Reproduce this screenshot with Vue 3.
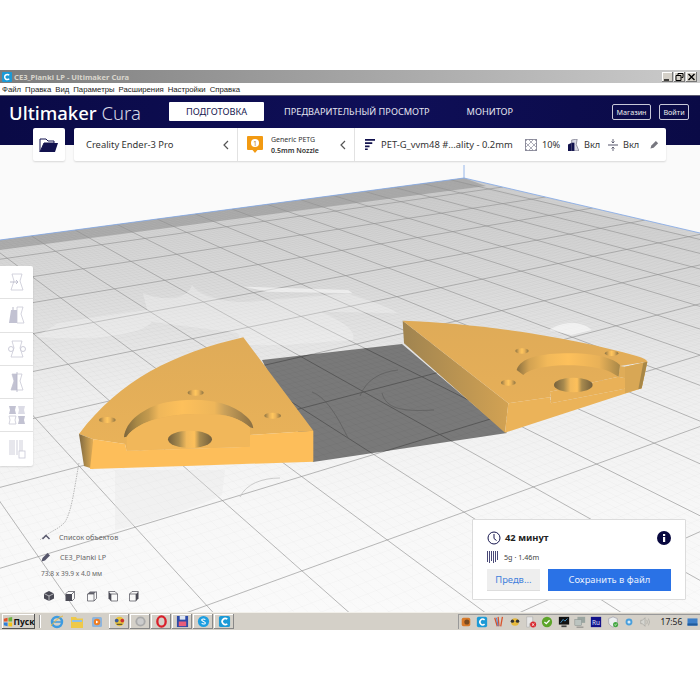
<script setup>
// perspective of the build plate, measured from the screenshot
const project = (j, k) => {
  const s = -0.0183 * j
  const t = -0.045 * k
  const w = 1 + s + t
  return [(464 + s * 1923 - t * 360) / w, (178 - s * 17 - t * 14) / w]
}

const linesPath = (step, skipMajor) => {
  let d = ''
  const pt = (p) => p[0].toFixed(1) + ' ' + p[1].toFixed(1)
  const count = Math.round(24 / step)
  for (let n = 0; n <= count; n++) {
    const j = 0.5 + n * step
    if (skipMajor && n % 10 === 0) continue
    const kEnd = (0.85 - 0.0183 * j) / 0.045
    if (kEnd > 0) d += 'M' + pt(project(j, 0)) + 'L' + pt(project(j, kEnd))
  }
  const kCount = Math.round(19 / step)
  for (let n = 1; n <= kCount; n++) {
    const k = n * step
    if (skipMajor && n % 10 === 0) continue
    const jEnd = Math.min(24.5, (0.85 - 0.045 * k) / 0.0183)
    if (jEnd > 0) d += 'M' + pt(project(0, k)) + 'L' + pt(project(jEnd, k))
  }
  return d
}

const majorLines = linesPath(1, false)
const minorLines = linesPath(0.1, true)

const menu = ['Файл', 'Правка', 'Вид', 'Параметры', 'Расширения', 'Настройки', 'Справка']
</script>

<template>
  <div class="page">
    <div class="window">
      <div class="titlebar">
        <svg class="title-icon" viewBox="0 0 10 10"><rect width="10" height="10" rx="1" fill="#1c9ad6"/><path d="M7.2 3.2A2.6 2.6 0 1 0 7.2 6.8" fill="none" stroke="#fff" stroke-width="1.5"/></svg>
        <span class="title-text">CE3_Planki LP - Ultimaker Cura</span>
        <div class="win-buttons">
          <span class="win-btn"><svg viewBox="0 0 11 10"><path d="M2 8h5" stroke="#000" stroke-width="1.4"/></svg></span>
          <span class="win-btn"><svg viewBox="0 0 11 10"><path d="M4 3.5V1.5h5v4H7.5M2 3.5h5v5H2z" fill="none" stroke="#000"/></svg></span>
          <span class="win-btn"><svg viewBox="0 0 11 10"><path d="M2.5 2l6 6M8.500 2l-6 6" stroke="#000" stroke-width="1.4"/></svg></span>
        </div>
      </div>

      <div class="menubar">
        <span v-for="item in menu" :key="item">{{ item }}</span>
      </div>

      <header class="header">
        <div class="brand"><b>Ultimaker</b> <span>Cura</span></div>
        <nav class="tabs">
          <span class="tab active">ПОДГОТОВКА</span>
          <span class="tab">ПРЕДВАРИТЕЛЬНЫЙ ПРОСМОТР</span>
          <span class="tab">МОНИТОР</span>
        </nav>
        <div class="head-buttons">
          <span class="head-btn shop">Магазин</span>
          <span class="head-btn login">Войти</span>
        </div>
      </header>

      <div class="viewport">
        <svg class="scene" viewBox="0 145 700 467">
          <defs>
            <linearGradient id="plate" gradientUnits="userSpaceOnUse" x1="0" y1="178" x2="0" y2="612">
              <stop offset="0" stop-color="#cdcdcd"/>
              <stop offset="0.25" stop-color="#dadada"/>
              <stop offset="0.5" stop-color="#eeeeee"/>
              <stop offset="0.75" stop-color="#f7f7f7"/>
              <stop offset="1" stop-color="#fafafa"/>
            </linearGradient>
            <linearGradient id="topL" x1="0" y1="0" x2="0" y2="1">
              <stop offset="0" stop-color="#dfab58"/>
              <stop offset="1" stop-color="#e9b259"/>
            </linearGradient>
            <linearGradient id="topR" x1="0" y1="0" x2="0" y2="1">
              <stop offset="0" stop-color="#dfab58"/>
              <stop offset="1" stop-color="#e6af58"/>
            </linearGradient>
            <linearGradient id="wallL" x1="0" y1="0" x2="1" y2="0">
              <stop offset="0" stop-color="#7c653c"/>
              <stop offset="0.1" stop-color="#a98946"/>
              <stop offset="0.19" stop-color="#c49a4e"/>
              <stop offset="0.27" stop-color="#efb75a"/>
              <stop offset="0.45" stop-color="#fdc05b"/>
              <stop offset="0.7" stop-color="#eeb65a"/>
              <stop offset="0.78" stop-color="#c9a05a"/>
              <stop offset="1" stop-color="#8a6f42"/>
            </linearGradient>
            <linearGradient id="wallR" x1="0" y1="0" x2="1" y2="0">
              <stop offset="0" stop-color="#8c7140"/>
              <stop offset="0.12" stop-color="#d2a252"/>
              <stop offset="0.3" stop-color="#f2b95a"/>
              <stop offset="0.5" stop-color="#fdc05b"/>
              <stop offset="0.8" stop-color="#e8b158"/>
              <stop offset="1" stop-color="#a78748"/>
            </linearGradient>
            <linearGradient id="bore" x1="0" y1="0" x2="1" y2="0">
              <stop offset="0" stop-color="#74603c"/>
              <stop offset="0.25" stop-color="#a88a4e"/>
              <stop offset="0.42" stop-color="#f1b95c"/>
              <stop offset="0.6" stop-color="#fdc05b"/>
              <stop offset="0.72" stop-color="#a88a4e"/>
              <stop offset="1" stop-color="#74603c"/>
            </linearGradient>
            <linearGradient id="pin" x1="0" y1="0" x2="1" y2="0">
              <stop offset="0" stop-color="#8c7444"/>
              <stop offset="0.3" stop-color="#e8b158"/>
              <stop offset="0.5" stop-color="#ffc65e"/>
              <stop offset="0.7" stop-color="#e8b158"/>
              <stop offset="1" stop-color="#8c7444"/>
            </linearGradient>
            <linearGradient id="edgeL" x1="0" y1="0" x2="1" y2="0">
              <stop offset="0" stop-color="#7e6740"/>
              <stop offset="0.5" stop-color="#b08c4a"/>
              <stop offset="1" stop-color="#e2ad57"/>
            </linearGradient>
            <linearGradient id="sideR" x1="0" y1="0" x2="1" y2="0">
              <stop offset="0" stop-color="#a08450"/>
              <stop offset="1" stop-color="#d2a253"/>
            </linearGradient>
            <clipPath id="plateClip"><polygon points="464,178 0,240 0,612 700,612 700,233"/></clipPath>
            <clipPath id="grayClip"><polygon points="262,360 402,344 507,433 313,462"/></clipPath>
          </defs>

          <polygon points="464,178 0,240 0,612 700,612 700,233" fill="url(#plate)"/>
          <polygon points="464,178 0,240 0,250 486,186" fill="#adadad"/>
          <path :d="minorLines" clip-path="url(#plateClip)" stroke="#000" stroke-opacity="0.035" stroke-width="0.6" fill="none"/>
          <path :d="majorLines" clip-path="url(#plateClip)" stroke="#8f8f8f" stroke-opacity="0.7" stroke-width="0.9" fill="none"/>
          <path d="M0 240L464 178L700 233M464 178V165" stroke="#7fa6e6" stroke-width="0.8" fill="none"/>

          <!-- pale shadows left on the plate -->
          <g transform="translate(0 145) scale(0.4464 0.3333)" fill="#fff" fill-opacity="0.25">
            <path d="M130 535C200 520 290 500 330 495L320 445C370 470 420 465 430 420C450 460 520 475 560 470L780 445C830 470 880 490 890 505L720 500C770 530 800 560 790 585L640 600L480 600C560 580 550 560 480 555L340 530C320 570 200 590 80 575Z"/>
            <path d="M1230 555C1260 530 1300 525 1325 555L1280 570Z" fill-opacity="0.55"/>
            <path d="M545 425L780 435L790 445L600 440Z" fill-opacity="0.5"/>
          </g>
          <path d="M115 470H225L222 495C190 510 140 525 115 530Z" fill="#e4e4e4" fill-opacity="0.3"/>
          <path d="M79 463C74 490 72 510 65 522C58 530 48 532 40 540" fill="none" stroke="#a8a8a8" stroke-width="0.8" stroke-dasharray="1.500 1"/>
          <path d="M240 497C246 484 262 478 280 478" fill="none" stroke="#c0c0c0" stroke-width="0.8"/>

          <!-- plate seen through the gap between the parts -->
          <polygon points="262,360 402,344 507,433 313,462" fill="#797979"/>
          <g clip-path="url(#grayClip)">
            <path :d="minorLines" stroke="#000" stroke-opacity="0.05" stroke-width="0.5" fill="none"/>
            <path :d="majorLines" stroke="#555" stroke-width="0.9" fill="none"/>
            <path d="M360 396C366 380 380 372 398 370M382 393C386 408 400 412 434 410M312 392C328 398 340 422 348 438" stroke="#5c5c5c" stroke-width="0.7" fill="none"/>
          </g>

          <!-- left part -->
          <g transform="translate(60 320) scale(0.3333)">
            <path d="M57 342C180 180 340 100 550 52L760 332L570 345V380L200 392L195 372L100 358Z" fill="url(#topL)"/>
            <path d="M57 342L100 358V447L72 438Z" fill="url(#edgeL)"/>
            <path d="M100 358L195 372L200 392L570 380V345L760 332V425L400 437L90 447Z" fill="#fdbe5a"/>
            <path d="M192 352C196 305 250 262 320 247C400 232 500 235 560 290Q578 305 580 325L570 322C540 295 500 282 440 282C340 280 240 295 200 350Z" fill="url(#wallL)"/>
            <path d="M200 350C240 295 340 280 440 282C500 282 540 295 570 322V380L200 392Z" fill="#f1b75a"/>
            <ellipse cx="390" cy="358" rx="66" ry="26" fill="url(#bore)"/>
            <ellipse cx="407" cy="218" rx="24" ry="9" fill="url(#pin)"/>
            <ellipse cx="142" cy="300" rx="25" ry="9" fill="url(#pin)"/>
            <ellipse cx="638" cy="287" rx="25" ry="9" fill="url(#pin)"/>
          </g>

          <!-- right part -->
          <g transform="translate(390 310) scale(0.3333)">
            <path d="M38 32L355 280L345 368L42 100Z" fill="url(#sideR)"/>
            <path d="M38 32C280 40 560 85 740 138Q772 148 772 155L690 168L685 200L480 245V262L355 280Z" fill="url(#topR)"/>
            <path d="M355 280L480 262L483 280L705 236V170L772 155L755 235L345 368Z" fill="#ebb359"/>
            <path d="M690 168L705 170V205L685 200Z" fill="#dfac58"/>
            <path d="M705 170L772 155L755 235L705 250Z" fill="#d8a755"/>
            <path d="M772 155L755 235L745 238L760 158Z" fill="#a78748"/>
            <path d="M483 280L480 245L685 200L705 205V236Z" fill="#e9b158"/>
            <path d="M380 180C392 140 460 128 560 130C620 132 670 145 690 165L686 200L660 185C620 168 540 160 470 170C430 175 410 185 400 195Z" fill="url(#wallR)"/>
            <ellipse cx="550" cy="225" rx="58" ry="22" fill="url(#bore)"/>
            <ellipse cx="396" cy="123" rx="20" ry="8" fill="url(#pin)"/>
            <ellipse cx="665" cy="130" rx="20" ry="8" fill="url(#pin)"/>
            <ellipse cx="355" cy="218" rx="22" ry="9" fill="url(#pin)"/>
          </g>
        </svg>

        <div class="tools">
          <div class="tool">
            <svg viewBox="0 0 20 20"><path d="M5 2H15L13 9L16 18H4L7 9Z" fill="none" stroke="#c9c9d6" stroke-width="0.8"/><path d="M3 10H11M9 8L11 10L9 12" fill="none" stroke="#b9b9c8" stroke-width="0.9"/></svg>
          </div>
          <div class="tool">
            <svg viewBox="0 0 20 20"><path d="M10 2H16L14 9L17 18H10Z" fill="none" stroke="#c9c9d6" stroke-width="0.8"/><path d="M4 5H10V18H2Z" fill="#c2c2d2"/><path d="M6 2V5" stroke="#b9b9c8"/></svg>
          </div>
          <div class="tool">
            <svg viewBox="0 0 20 20"><path d="M5 2H15L13 9L16 18H4L7 9Z" fill="none" stroke="#c9c9d6" stroke-width="0.8"/><circle cx="4" cy="10" r="2.500" fill="#fff" stroke="#c0c0cf" stroke-width="0.8"/><circle cx="16" cy="10" r="2.500" fill="#fff" stroke="#c0c0cf" stroke-width="0.8"/></svg>
          </div>
          <div class="tool">
            <svg viewBox="0 0 20 20"><path d="M5 2H15L13 9L16 18H4L7 9Z" fill="none" stroke="#c9c9d6" stroke-width="0.8"/><path d="M5 2H10V18H4L7 9Z" fill="#c2c2d2"/><path d="M10 0V20" stroke="#b4b4c6" stroke-width="0.8"/></svg>
          </div>
          <div class="tool">
            <svg viewBox="0 0 20 20"><path d="M2 1H9L8 5L9 9H2L3 5Z" fill="#c2c2d2"/><path d="M11 1H18L17 5L18 9H11L12 5Z" fill="#dcdce6"/><path d="M2 11H9L8 15L9 19H2L3 15Z" fill="none" stroke="#c9c9d6" stroke-width="0.8"/><path d="M11 11H18L17 15L18 19H11L12 15Z" fill="#c2c2d2"/></svg>
          </div>
          <div class="tool">
            <svg viewBox="0 0 20 20"><path d="M3 1V16M5 1V16M7 1V16M10 1V16M13 1V12M15 1V12" stroke="#c9c9d6" stroke-width="0.9"/><rect x="12" y="12" width="6" height="7" fill="#fff" stroke="#c9c9d6" stroke-width="0.8"/></svg>
          </div>
        </div>

        <div class="objects">
          <div class="obj-row">
            <svg class="obj-icon" viewBox="0 0 10 10"><path d="M1.500 7L5 3.500L8.500 7" fill="none" stroke="#55556a" stroke-width="1.400"/></svg>
            <span>Список объектов</span>
          </div>
          <div class="obj-row name">
            <svg class="obj-icon" viewBox="0 0 10 10"><path d="M0.500 9.500L1.500 6L6.500 1L9 3.500L4 8.500Z" fill="#55556a"/></svg>
            <span>CE3_Planki LP</span>
          </div>
          <div class="dims">73.8 x 39.9 x 4.0 мм</div>
          <div class="views">
            <svg viewBox="0 0 12 12"><path d="M6 1L11 3.500V8.500L6 11L1 8.500V3.500Z" fill="#4a4a55"/><path d="M1 3.500L6 6L11 3.500M6 6V11" stroke="#fff" stroke-width="0.6" fill="none"/></svg>
            <svg viewBox="0 0 12 12"><path d="M1.500 4H8V11H1.500Z" fill="#4a4a55"/><path d="M1.500 4L4 1.500H10.500V8.500L8 11M8 4L10.500 1.500" fill="none" stroke="#4a4a55" stroke-width="0.7"/></svg>
            <svg viewBox="0 0 12 12"><path d="M1.500 4L4 1.500H10.500L8 4Z" fill="#6a6a75"/><path d="M1.500 4H8V11H1.500ZM8 11L10.500 8.500V1.500" fill="none" stroke="#4a4a55" stroke-width="0.7"/></svg>
            <svg viewBox="0 0 12 12"><path d="M1.500 1.500L4 4V11L1.500 8.500Z" fill="#4a4a55"/><path d="M1.500 1.500H8L10.500 4V11H4V4H10.500" fill="none" stroke="#4a4a55" stroke-width="0.7"/></svg>
            <svg viewBox="0 0 12 12"><path d="M8 4L10.500 1.500V8.500L8 11Z" fill="#4a4a55"/><path d="M1.500 4H8V11H1.500ZM1.500 4L4 1.500H10.500" fill="none" stroke="#4a4a55" stroke-width="0.7"/></svg>
          </div>
        </div>

        <div class="print-card">
          <div class="time-row">
            <svg class="clock" viewBox="0 0 14 14"><circle cx="7" cy="7" r="6" fill="none" stroke="#16164e" stroke-width="1"/><path d="M7 3V7.500L9.500 9.500" fill="none" stroke="#16164e"/></svg>
            <span class="time">42 минут</span>
            <svg class="info" viewBox="0 0 14 14"><circle cx="7" cy="7" r="7" fill="#08083f"/><rect x="6" y="6" width="2.200" height="5" fill="#fff"/><rect x="6" y="3" width="2.200" height="2" fill="#fff"/></svg>
          </div>
          <div class="usage-row">
            <svg class="spool" viewBox="0 0 12 12"><path d="M0.500 0V11M2.500 0V12M4.500 0V10M6.500 0V12M8.500 0V11M10.500 0V9" stroke="#4a4a78" stroke-width="1"/></svg>
            <span>5g · 1.46m</span>
          </div>
          <div class="actions">
            <span class="btn-preview">Предв...</span>
            <span class="btn-save">Сохранить в файл</span>
          </div>
        </div>
      </div>

      <div class="toolbar">
        <div class="folder">
          <svg viewBox="0 0 20 16"><path d="M1 15V2H7L9 4H15V6H5Z" fill="none" stroke="#12124e" stroke-width="1"/><path d="M1 15L5 6H19L16 15Z" fill="#12124e"/></svg>
        </div>
        <div class="settings">
          <div class="sec machine">
            <span class="machine-name">Creality Ender-3 Pro</span>
            <svg class="chev" viewBox="0 0 6 10"><path d="M5 1L1 5L5 9" fill="none" stroke="#555" stroke-width="1.200"/></svg>
          </div>
          <div class="sec extruder">
            <svg class="badge" viewBox="0 0 16 18"><path d="M1 0H15Q16 0 16 1V13Q16 14 15 14H10.500L8 17L5.500 14H1Q0 14 0 13V1Q0 0 1 0Z" fill="#f29a12"/><circle cx="8" cy="7" r="4" fill="#fff"/><text x="8" y="9.500" font-size="6.500" text-anchor="middle" fill="#b87500" font-family="Noto Sans, sans-serif">1</text></svg>
            <div class="ext-text">
              <span>Generic PETG</span>
              <b>0.5mm Nozzle</b>
            </div>
            <svg class="chev" viewBox="0 0 6 10"><path d="M5 1L1 5L5 9" fill="none" stroke="#555" stroke-width="1.200"/></svg>
          </div>
          <div class="sec profile">
            <svg class="ico-profile" viewBox="0 0 11 12"><path d="M0 0H11V2H0ZM0 3.500H8V5.500H0ZM0 7H5V9H0ZM0 10.500H3V12H0Z" fill="#12124e"/></svg>
            <span class="profile-name">PET-G_vvm48 #...ality - 0.2mm</span>
            <svg class="ico-infill" viewBox="0 0 12 12"><rect x="0.500" y="0.500" width="11" height="11" fill="none" stroke="#8a8a9a"/><path d="M0 3L3 0M0 9L9 0M3 12L12 3M9 12L12 9M0 3L9 12M3 0L12 9M0 9L3 12M9 0L12 3" stroke="#9a9aa8" stroke-width="0.8"/></svg>
            <span class="val pct">10%</span>
            <svg class="ico-support" viewBox="0 0 12 13"><path d="M0 13V6L4 4V13Z" fill="#12124e"/><path d="M4 1L10 0L9 6L12 13H4Z" fill="#12124e" fill-opacity="0.15" stroke="#55556a" stroke-width="0.6"/><path d="M4 4H7V13H4Z" fill="#12124e"/></svg>
            <span class="val">Вкл</span>
            <svg class="ico-adhesion" viewBox="0 0 10 12"><path d="M0 6H10" stroke="#55556a" stroke-width="1"/><path d="M5 0V4M3.500 2.500L5 4L6.500 2.500M5 12V8M3.500 9.500L5 8L6.500 9.500" fill="none" stroke="#55556a" stroke-width="0.9"/></svg>
            <span class="val">Вкл</span>
            <svg class="ico-pencil" viewBox="0 0 10 10"><path d="M0.500 9.500L1.500 6L6.500 1L9 3.500L4 8.500Z" fill="#77777f"/></svg>
          </div>
        </div>
      </div>

      <footer class="taskbar">
        <span class="start">
          <svg viewBox="0 0 12 12"><path d="M1 2L5.500 1V5.500H1Z" fill="#e2552b"/><path d="M6.500 1L11 0V5.500H6.500Z" fill="#6cb33f"/><path d="M1 6.500H5.500V11L1 10Z" fill="#2f7fd6"/><path d="M6.500 6.500H11V11.500L6.500 11Z" fill="#f5c518"/></svg>
          <b>Пуск</b>
        </span>
        <i class="bar-sep"></i>
        <div class="quick">
          <svg viewBox="0 0 14 14"><circle cx="7" cy="7" r="5" fill="none" stroke="#3d9be0" stroke-width="2.400"/><path d="M2 7H12" stroke="#3d9be0" stroke-width="1.500"/><path d="M1 11C4 7 9 2 13 1" stroke="#e8b93c" fill="none"/></svg>
          <svg viewBox="0 0 14 14"><path d="M1 2H6L7 3.500H13V13H1Z" fill="#eec94a"/><path d="M2 5H12V7H2Z" fill="#8fc0e6"/></svg>
          <svg viewBox="0 0 14 14"><rect x="2" y="2" width="10" height="10" rx="1.500" fill="#8db4dc"/><circle cx="7" cy="7" r="3.200" fill="#ef7d22"/><path d="M6 5.500L8.500 7L6 8.500Z" fill="#fff"/></svg>
        </div>
        <div class="tasks">
          <span class="task"><svg viewBox="0 0 14 14"><circle cx="7" cy="7" r="5" fill="#e6c23e"/><circle cx="4" cy="6" r="2" fill="#3c5a9a"/><circle cx="10" cy="6" r="2" fill="#c33"/><path d="M4 10H10" stroke="#333"/></svg></span>
          <span class="task"><svg viewBox="0 0 14 14"><circle cx="7" cy="7" r="5.500" fill="#aaa"/><circle cx="7" cy="7" r="3.500" fill="#ccc"/></svg></span>
          <span class="task"><svg viewBox="0 0 14 14"><ellipse cx="7" cy="7" rx="4.500" ry="5.500" fill="none" stroke="#d9202a" stroke-width="2.500"/></svg></span>
          <span class="task"><svg viewBox="0 0 14 14"><rect x="1" y="1" width="12" height="12" fill="#2c4aa8"/><rect x="4" y="1" width="6" height="4" fill="#dfe6f2"/><rect x="3" y="7" width="8" height="5" fill="#e85d7a"/></svg></span>
          <span class="task"><svg viewBox="0 0 14 14"><circle cx="7" cy="7" r="6" fill="#1d9ee0"/><path d="M9 5C8 4 5 4 5 5.500S9 7 9 8.500S6 10 5 9" fill="none" stroke="#fff" stroke-width="1.200"/></svg></span>
          <span class="task"><svg viewBox="0 0 14 14"><rect x="1" y="1" width="12" height="12" rx="2" fill="#1c9ad6"/><path d="M10 4.500A3.300 3.300 0 1 0 10 9.500" fill="none" stroke="#fff" stroke-width="1.800"/></svg></span>
        </div>
        <div class="tray">
          <svg viewBox="0 0 14 14"><rect x="2" y="2" width="10" height="10" rx="2" fill="#d87a2a"/><circle cx="8" cy="7" r="3" fill="#7a4a20"/></svg>
          <svg viewBox="0 0 14 14"><rect x="1" y="1" width="12" height="12" rx="2" fill="#1c9ad6"/><path d="M10 4.500A3.300 3.300 0 1 0 10 9.500" fill="none" stroke="#fff" stroke-width="1.800"/></svg>
          <svg viewBox="0 0 14 14"><path d="M2 2L5 12M6 1L7 12M11 1L9 12" fill="none" stroke="#d9532c" stroke-width="1.500"/><path d="M4 2L6 12" stroke="#3a7bd5"/></svg>
          <svg viewBox="0 0 14 14"><circle cx="7" cy="7" r="4.500" fill="#e6b93e"/><circle cx="4" cy="6" r="2" fill="#333"/><circle cx="10" cy="6" r="2" fill="#333"/></svg>
          <svg viewBox="0 0 14 14"><path d="M2 1H9V9H5V13H2Z" fill="#e8e8e8" stroke="#999" stroke-width="0.500"/><circle cx="9.500" cy="10" r="3.500" fill="#d8262c"/><path d="M8 8.500L11 11.500M11 8.500L8 11.500" stroke="#fff"/></svg>
          <svg viewBox="0 0 14 14"><circle cx="7" cy="7" r="6" fill="#5da52a"/><path d="M4 7L6.200 9L10 5" fill="none" stroke="#fff" stroke-width="1.500"/></svg>
          <svg viewBox="0 0 14 14"><rect x="1" y="1" width="12" height="9" fill="#111"/><path d="M3 8L6 4L8 6L11 3" stroke="#4aa3e0" fill="none"/><path d="M4 12H10" stroke="#444" stroke-width="2"/></svg>
          <svg viewBox="0 0 14 14"><rect x="4" y="1" width="9" height="7" fill="#9aa5a0"/><rect x="1" y="4" width="8" height="7" fill="#bcc4c0" stroke="#7a8480" stroke-width="0.500"/><path d="M3 13H11" stroke="#777"/></svg>
          <svg viewBox="0 0 14 14"><rect x="1" y="1" width="12" height="12" fill="#12128a"/><text x="7" y="10" font-size="7.500" text-anchor="middle" fill="#dfe3ff" font-family="Noto Sans, sans-serif">Ru</text></svg>
          <svg viewBox="0 0 14 14"><path d="M7 1L12 3V8C12 10 9 12 7 13C5 12 2 10 2 8V3Z" fill="#eceff0" stroke="#889" stroke-width="0.600"/><circle cx="10" cy="10" r="3" fill="#45a843"/><path d="M8.700 10L9.700 11L11.300 9" stroke="#fff" fill="none" stroke-width="0.800"/></svg>
          <svg viewBox="0 0 14 14"><circle cx="7" cy="7" r="4" fill="#4a9fdc"/><circle cx="7" cy="7" r="1.800" fill="#d8eaf8"/></svg>
          <svg viewBox="0 0 14 14"><path d="M2 5H4L7 2V12L4 9H2Z" fill="#d5d5d0" stroke="#8a8a85" stroke-width="0.500"/><path d="M9 4.500Q10.500 7 9 9.500M11 3Q13.500 7 11 11" fill="none" stroke="#a5a5a0" stroke-width="0.800"/></svg>
          <span class="clock-time">17:56</span>
          <svg class="desktop" viewBox="0 0 14 14"><rect x="0" y="2" width="14" height="10" fill="#3d7fc8"/><path d="M0 9H14V12H0Z" fill="#1f5a9c"/></svg>
        </div>
      </footer>
    </div>
  </div>
</template>

<style scoped>
.page {
  width: 700px;
  height: 700px;
  padding-top: 70px;
  box-sizing: border-box;
  background: #fff;
  font-family: "Noto Sans", "Open Sans", sans-serif;
  overflow: hidden;
}

.window {
  position: relative;
  height: 560px;
  display: flex;
  flex-direction: column;
}

.titlebar {
  height: 13px;
  display: flex;
  align-items: center;
  background: linear-gradient(90deg, #7d7d7d, #cbcbcb);
  padding-left: 2px;
  flex: none;
}

.title-icon { width: 10px; height: 10px; }

.title-text {
  margin-left: 2px;
  font-size: 7.6px;
  font-weight: 700;
  color: #d8d5cc;
  white-space: nowrap;
}

.win-buttons {
  margin-left: auto;
  margin-right: 3px;
  display: flex;
  gap: 1px;
}

.win-btn {
  width: 11px;
  height: 10px;
  background: #d4d0c8;
  box-shadow: inset -1px -1px #777, inset 1px 1px #fff;
  display: block;
}

.win-btn svg { display: block; width: 11px; height: 10px; }

.menubar {
  height: 12px;
  flex: none;
  background: #fff;
  display: flex;
  align-items: center;
  gap: 4px;
  padding-left: 2px;
  font-family: "Liberation Sans", sans-serif;
  font-size: 7.75px;
  color: #222;
}

.header {
  height: 50px;
  flex: none;
  box-sizing: border-box;
  border-top: 1px solid #5a5a70;
  background: linear-gradient(90deg, #0a0a46, #0f0f58 55%, #0a0a46);
  display: flex;
  align-items: flex-start;
  padding: 6px 11px 0 9px;
}

.brand {
  width: 160px;
  flex: none;
  font-size: 18.5px;
  line-height: 22px;
  color: #fff;
  white-space: nowrap;
}

.brand b { font-weight: 500; }
.brand span { font-weight: 300; color: #d8d8e4; }

.tabs {
  display: flex;
  align-items: center;
  font-size: 9.2px;
  color: #e4e4f0;
  white-space: nowrap;
}

.tab { line-height: 19px; margin-right: 37px; }

.tab.active {
  width: 95px;
  text-align: center;
  background: #fff;
  color: #16164e;
  margin-right: 20px;
  border-radius: 1px;
}

.head-buttons {
  margin-left: auto;
  display: flex;
  gap: 8px;
  margin-top: 2px;
}

.head-btn {
  height: 16px;
  line-height: 15px;
  box-sizing: border-box;
  border: 1px solid #c8c8d8;
  border-radius: 2px;
  font-size: 7.2px;
  color: #eee;
  text-align: center;
}

.shop { width: 39px; }
.login { width: 30px; }

.viewport {
  position: relative;
  flex: 1;
  background: #fafafa;
  overflow: hidden;
}

.scene {
  position: absolute;
  left: 0;
  top: 0;
  width: 700px;
  height: 467px;
  display: block;
}

.toolbar {
  position: absolute;
  left: 33px;
  top: 58px;
  display: flex;
  gap: 9px;
  color: #333;
}

.folder, .settings {
  height: 33px;
  background: #fff;
  border-radius: 2px;
  box-shadow: 0 1px 2px rgba(0, 0, 0, 0.14);
}

.folder {
  width: 32px;
  display: flex;
  align-items: center;
  justify-content: center;
}

.folder svg { width: 20px; height: 16px; }

.settings { width: 592px; display: flex; }

.sec {
  display: flex;
  align-items: center;
  box-sizing: border-box;
  border-right: 1px solid #e2e2e2;
}

.sec:last-child { border-right: none; }

.machine { width: 164px; padding-left: 12px; }
.machine-name { font-size: 9.4px; width: 137px; white-space: nowrap; }
.chev { width: 6px; height: 10px; flex: none; }

.extruder { width: 117px; padding-left: 9px; }
.badge { width: 16px; height: 18px; flex: none; }

.ext-text {
  margin-left: 8px;
  width: 69px;
  display: flex;
  flex-direction: column;
  font-size: 7px;
  line-height: 11px;
  white-space: nowrap;
}

.ext-text b { font-weight: 600; }

.profile { flex: 1; padding-left: 10px; }
.profile svg { flex: none; }
.ico-profile { width: 10px; height: 11px; }
.profile-name { margin-left: 6px; width: 144px; font-size: 9.4px; white-space: nowrap; flex: none; }
.ico-infill { width: 12px; height: 12px; }
.val { font-size: 9.2px; margin-left: 5px; width: 16px; flex: none; white-space: nowrap; }
.pct { width: 20px; }
.ico-support { width: 11px; height: 12px; margin-left: 6px; }
.ico-adhesion { width: 10px; height: 12px; margin-left: 8px; }
.ico-pencil { width: 9px; height: 9px; margin-left: 11px; }

.tools {
  position: absolute;
  left: 0;
  top: 121px;
  width: 33px;
  background: #fff;
  border-radius: 0 2px 2px 0;
  box-shadow: 0 1px 2px rgba(0, 0, 0, 0.12);
}

.tool {
  height: 33.3px;
  box-sizing: border-box;
  border-bottom: 1px solid #e2e2e2;
  display: flex;
  align-items: center;
  justify-content: center;
}

.tool:last-child { border-bottom: none; }
.tool svg { width: 20px; height: 20px; }

.objects {
  position: absolute;
  left: 41px;
  top: 385px;
  font-size: 7.2px;
  color: #666;
  white-space: nowrap;
}

.obj-row {
  display: flex;
  align-items: center;
  height: 14px;
}

.obj-row.name { margin-top: 6px; }
.obj-icon { width: 10px; height: 10px; margin-right: 8px; }
.obj-row.name .obj-icon { margin-right: 9px; }
.dims { margin-top: 3px; line-height: 14px; font-size: 6.6px; }

.views {
  display: flex;
  gap: 9.3px;
  margin-top: 9px;
  margin-left: 2px;
}

.views svg { width: 12px; height: 12px; }

.print-card {
  position: absolute;
  left: 472px;
  top: 374px;
  width: 214px;
  height: 81px;
  box-sizing: border-box;
  background: #fff;
  border: 1px solid #dcdcdc;
  border-radius: 1px;
  padding: 10px 14px 0;
}

.time-row {
  display: flex;
  align-items: center;
  height: 15px;
}

.clock { width: 14px; height: 14px; }

.time {
  margin-left: 4px;
  font-size: 9.4px;
  font-weight: 700;
  color: #222;
}

.info { width: 14px; height: 14px; margin-left: auto; }

.usage-row {
  display: flex;
  align-items: center;
  margin-top: 5px;
  height: 13px;
  font-size: 7.2px;
  color: #444;
}

.spool { width: 12px; height: 12px; margin-right: 5px; }

.actions {
  display: flex;
  gap: 8px;
  margin-top: 6px;
}

.btn-preview, .btn-save {
  height: 22px;
  line-height: 21px;
  text-align: center;
  box-sizing: border-box;
  font-size: 9.4px;
}

.btn-preview {
  width: 53px;
  background: #eeeeee;
  border-bottom: 1px solid #ddd;
  color: #3f7fdc;
}

.btn-save {
  width: 124px;
  background: #2a72e6;
  color: #e8f0fd;
}

.taskbar {
  height: 18px;
  flex: none;
  box-sizing: border-box;
  background: #d4d0c8;
  border-top: 1px solid #f2f0ea;
  display: flex;
  align-items: center;
}

.start {
  margin-left: 2px;
  width: 33px;
  height: 15px;
  flex: none;
  display: flex;
  align-items: center;
  justify-content: center;
  gap: 1px;
  box-shadow: inset -1px -1px #555, inset 1px 1px #fff;
  font-size: 8.5px;
  color: #111;
}

.start svg { width: 10px; height: 10px; }

.bar-sep {
  width: 1px;
  height: 13px;
  margin-left: 4px;
  background: #999;
  border-right: 1px solid #fff;
}

.quick {
  display: flex;
  gap: 6px;
  margin-left: 9px;
  margin-right: 5px;
}

.quick svg { width: 14px; height: 14px; }

.tasks { display: flex; gap: 1px; }

.task {
  width: 20px;
  height: 15px;
  display: flex;
  align-items: center;
  justify-content: center;
  box-shadow: inset -1px -1px #888, inset 1px 1px #fff;
}

.task svg { width: 13px; height: 13px; }

.tray {
  margin-left: auto;
  height: 15px;
  width: 242px;
  box-sizing: border-box;
  display: flex;
  align-items: center;
  gap: 4.3px;
  padding-left: 2px;
  box-shadow: inset 1px 1px #999;
}

.tray svg { width: 12px; height: 12px; flex: none; }
.clock-time { font-size: 8.5px; color: #222; margin-left: 5px; width: 23px; flex: none; }
.tray .desktop { width: 11px; height: 10px; margin-left: -1px; }
</style>
